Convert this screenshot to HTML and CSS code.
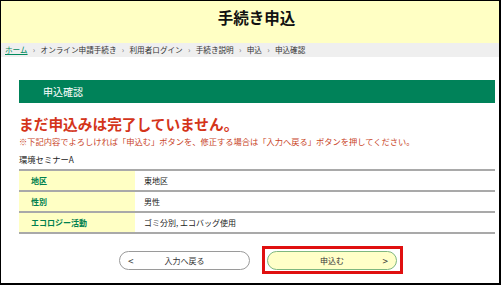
FILE: index.html
```html
<!DOCTYPE html>
<html lang="ja">
<head>
<meta charset="utf-8">
<title>手続き申込</title>
<link rel="stylesheet" href="styles.css">
</head>
<body>
<div class="frame">
  <header class="site-header"><h1 class="title">手続き申込</h1></header>
  <nav class="crumbs">
    <a class="crumb-home" href="#">ホーム</a><span class="sep">›</span><span>オンライン申請手続き</span><span class="sep">›</span><span>利用者ログイン</span><span class="sep">›</span><span>手続き説明</span><span class="sep">›</span><span>申込</span><span class="sep">›</span><span>申込確認</span>
  </nav>
  <main class="content">
    <h2 class="section-bar">申込確認</h2>
    <p class="warn">まだ申込みは完了していません。</p>
    <p class="note">※下記内容でよろしければ「申込む」ボタンを、修正する場合は「入力へ戻る」ボタンを押してください。</p>
    <p class="event">環境セミナーA</p>
    <table class="confirm">
      <tr><th>地区</th><td>東地区</td></tr>
      <tr><th>性別</th><td>男性</td></tr>
      <tr><th>エコロジー活動</th><td>ゴミ分別, エコバッグ使用</td></tr>
    </table>
    <div class="actions">
      <button class="btn btn-back" type="button"><span class="arrow-l">&lt;</span><span class="btn-label">入力へ戻る</span><span></span></button>
      <div class="highlight">
        <button class="btn btn-submit" type="button"><span></span><span class="btn-label">申込む</span><span class="arrow-r">&gt;</span></button>
      </div>
    </div>
  </main>
</div>
</body>
</html>
```

FILE: styles.css
```css
* { box-sizing: border-box; }
html, body { margin: 0; padding: 0; background: #fff; }
body {
  font-family: "Noto Sans CJK JP", "Noto Sans", sans-serif;
  color: #222;
}
.frame {
  width: 501px;
  height: 285px;
  border-style: solid;
  border-color: #000;
  border-width: 1px 2px 2px 1px;
  overflow: hidden;
}
.site-header {
  height: 42px;
  background: #ffffc4;
  padding-top: 6px;
  padding-left: 13px;
}
.title {
  margin: 0;
  text-align: center;
  font-size: 15.5px;
  line-height: 20px;
  font-weight: bold;
  color: #111;
}
.crumbs {
  height: 14px;
  background: #efefef;
  padding-left: 4px;
  font-size: 7.6px;
  line-height: 14px;
  color: #333;
  white-space: nowrap;
}
.crumb-home { color: #008a5e; text-decoration: underline; }
.sep { color: #777; margin: 0 5.3px; font-size: 8px; }
.content { padding: 0 4px 0 18px; }
.section-bar {
  margin: 23px 0 0;
  height: 23px;
  background: #008259;
  color: #fff;
  font-size: 10px;
  font-weight: normal;
  line-height: 23px;
  padding-left: 24px;
}
.warn {
  margin: 12px 0 0;
  font-size: 14.7px;
  line-height: 18px;
  font-weight: bold;
  color: #d4351a;
}
.note {
  margin: 3px 0 0;
  font-size: 8.25px;
  line-height: 10px;
  color: #c9441f;
  white-space: nowrap;
}
.event {
  margin: 8px 0 0;
  font-size: 8.3px;
  line-height: 10px;
  color: #222;
}
.confirm {
  margin-top: 5px;
  width: 100%;
  border-collapse: collapse;
  border-top: 2px solid #a9a9a9;
  font-size: 8px;
}
.confirm tr { border-bottom: 2px solid #a9a9a9; }
.confirm th, .confirm td { height: 21px; padding: 0; text-align: left; vertical-align: middle; }
.confirm th {
  width: 116px;
  background: #ffffc4;
  color: #00804f;
  font-weight: bold;
  padding-left: 12px;
}
.confirm td { padding-left: 9px; color: #222; }
.actions {
  margin-top: 12px;
  display: flex;
  justify-content: center;
  align-items: center;
  gap: 12px;
  padding-left: 8px;
}
.btn {
  display: grid;
  grid-template-columns: 1fr auto 1fr;
  align-items: center;
  height: 19px;
  border-radius: 10px;
  font-family: inherit;
  font-size: 8px;
  color: #333;
  padding: 0 8px;
  margin: 0;
}
.btn-back { width: 131px; background: #fff; border: 1px solid #9a9a9a; }
.btn-submit { width: 130px; background: #ffffc8; border: 1px solid #7fb77f; }
.arrow-l, .arrow-r { font-size: 10px; color: #333; }
.arrow-l { justify-self: start; }
.arrow-r { justify-self: end; }
.highlight {
  border: 3px solid #e01010;
  padding: 2px 3px 1px 2px;
}
```
